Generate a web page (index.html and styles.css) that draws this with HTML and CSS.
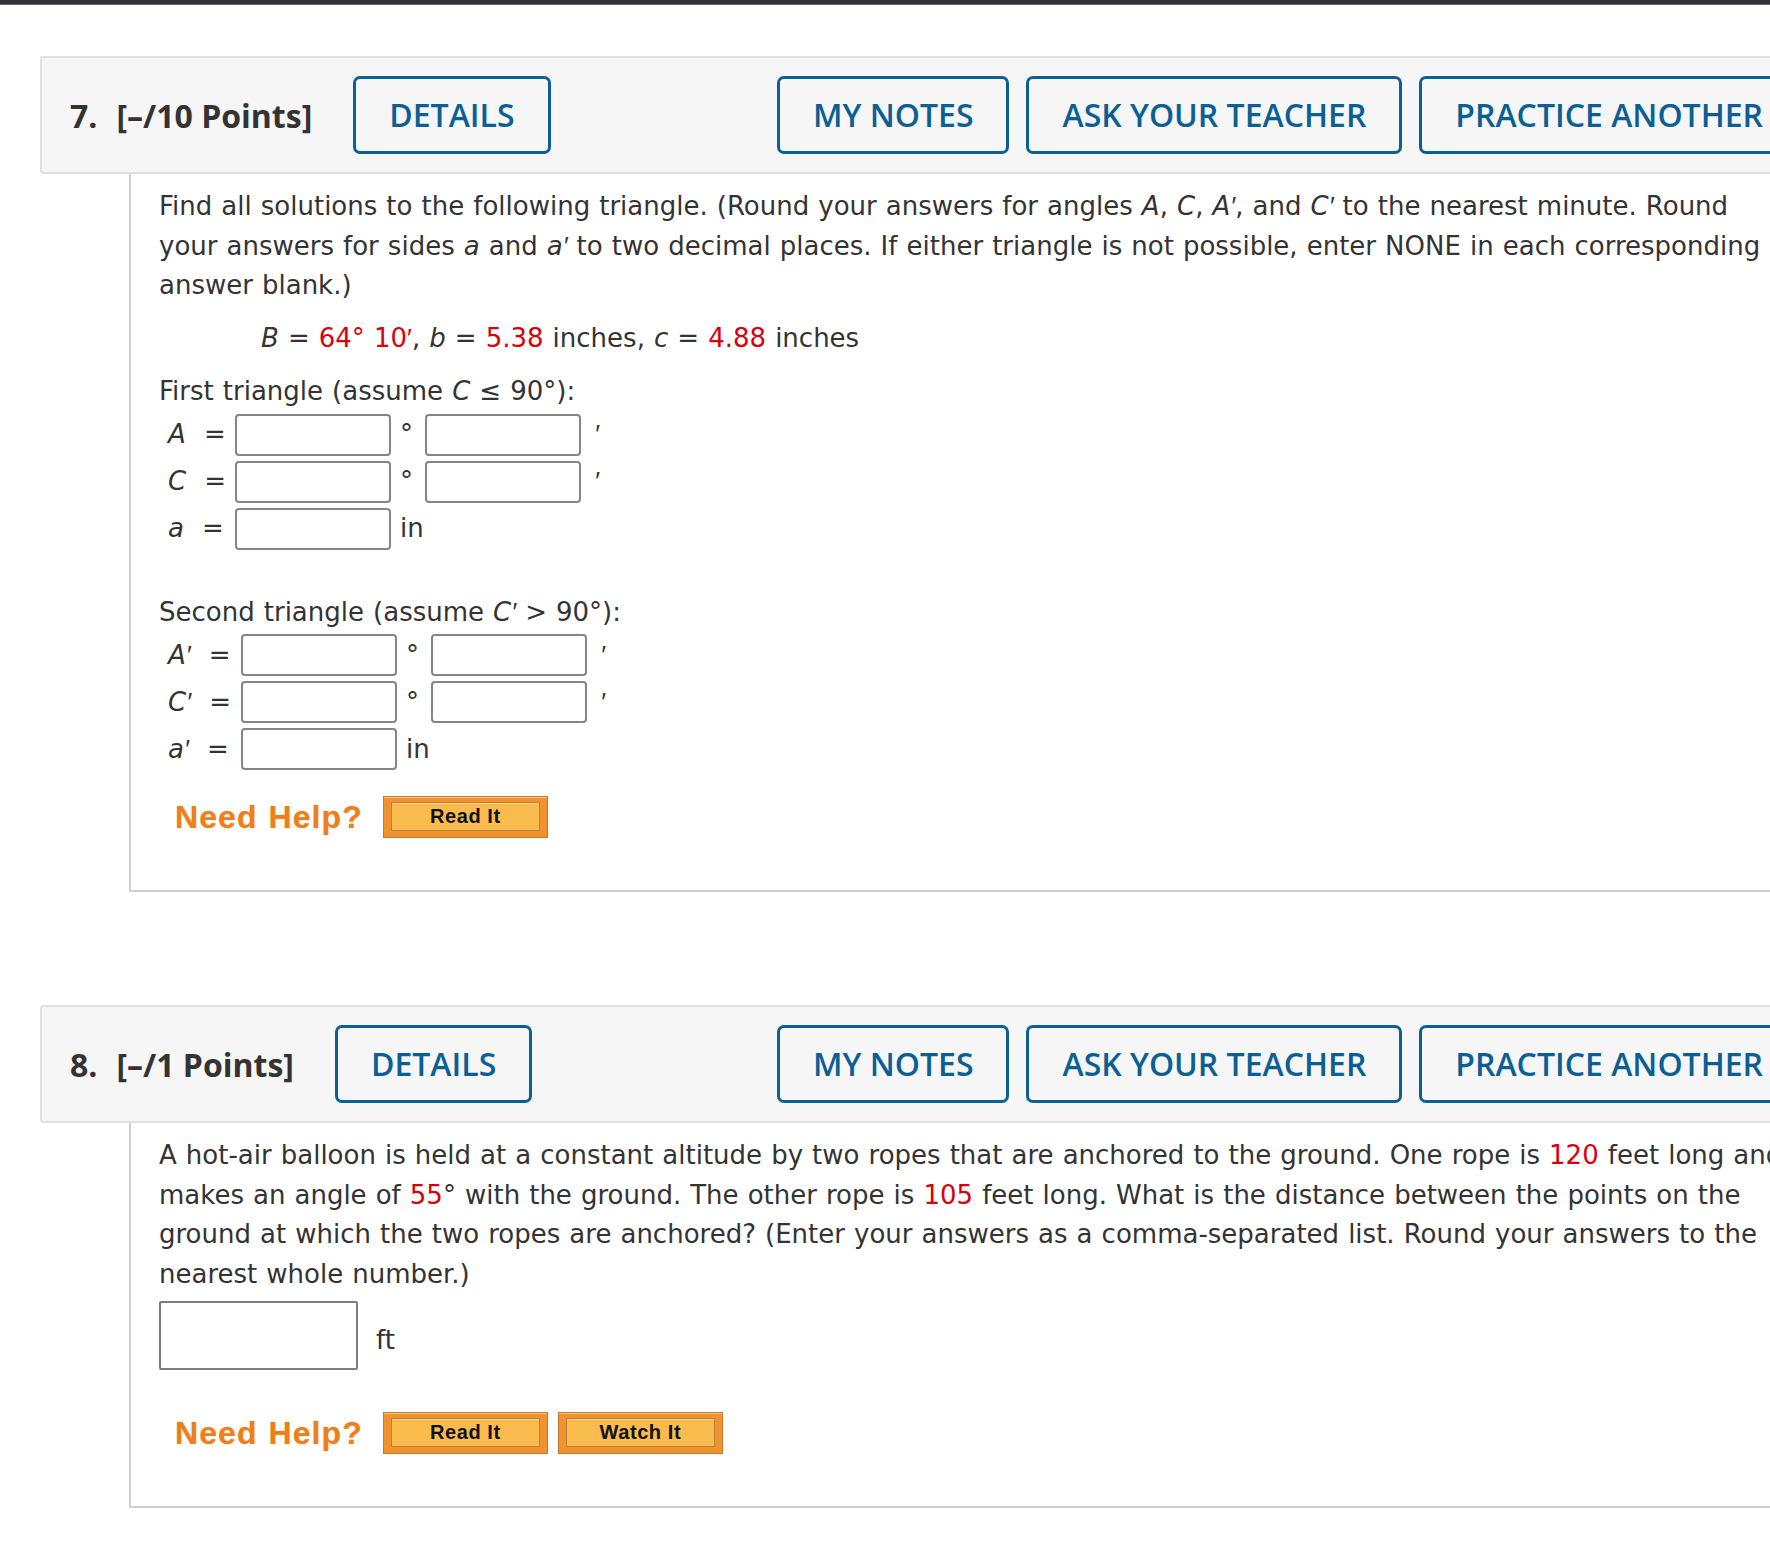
FILE: index.html
```html
<!DOCTYPE html>
<html lang="en">
<head>
<meta charset="utf-8">
<title>Assignment</title>
<link rel="stylesheet" href="styles.css">
</head>
<body>
<div class="topbar"></div>
<main class="questions">
  <section class="question">
    <header class="q-head">
      <div class="q-title"><span class="q-num">7.</span>[–/10 Points]</div>
      <button class="hbtn">DETAILS</button>
      <div class="hbtn-group">
        <button class="hbtn">MY NOTES</button>
        <button class="hbtn">ASK YOUR TEACHER</button>
        <button class="hbtn">PRACTICE ANOTHER</button>
      </div>
    </header>
    <div class="q-body">
      <p class="prompt">Find all solutions to the following triangle. (Round your answers for angles <i>A</i>, <i>C</i>, <i>A<span class="pr">′</span></i>, and <i>C<span class="pr">′</span></i> to the nearest minute. Round<br>your answers for sides <i>a</i> and <i>a<span class="pr">′</span></i> to two decimal places. If either triangle is not possible, enter NONE in each corresponding answer blank.)</p>
      <p class="given"><i>B</i> = <span class="red">64° 10<span class="pr">′</span></span>, <i>b</i> = <span class="red">5.38</span> inches, <i>c</i> = <span class="red">4.88</span> inches</p>
      <p class="part-title">First triangle (assume <i>C</i> ≤ 90°):</p>
      <table class="answers">
        <tr><td class="lbl"><i>A</i>&nbsp; =</td><td><input class="ans" type="text"></td><td class="unit">°</td><td><input class="ans" type="text"></td><td class="unit prime"><i class="pr">′</i></td></tr>
        <tr><td class="lbl"><i>C</i>&nbsp; =</td><td><input class="ans" type="text"></td><td class="unit">°</td><td><input class="ans" type="text"></td><td class="unit prime"><i class="pr">′</i></td></tr>
        <tr><td class="lbl"><i>a</i>&nbsp; =</td><td><input class="ans" type="text"></td><td class="unit" colspan="3">in</td></tr>
      </table>
      <p class="part-title second">Second triangle (assume <i>C<span class="pr">′</span></i> &gt; 90°):</p>
      <table class="answers primed">
        <tr><td class="lbl"><i>A<span class="pr">′</span></i>&nbsp; =</td><td><input class="ans" type="text"></td><td class="unit">°</td><td><input class="ans" type="text"></td><td class="unit prime"><i class="pr">′</i></td></tr>
        <tr><td class="lbl"><i>C<span class="pr">′</span></i>&nbsp; =</td><td><input class="ans" type="text"></td><td class="unit">°</td><td><input class="ans" type="text"></td><td class="unit prime"><i class="pr">′</i></td></tr>
        <tr><td class="lbl"><i>a<span class="pr">′</span></i>&nbsp; =</td><td><input class="ans" type="text"></td><td class="unit" colspan="3">in</td></tr>
      </table>
      <div class="help">
        <span class="need-help">Need Help?</span>
        <button class="help-btn"><span>Read It</span></button>
      </div>
    </div>
  </section>

  <section class="question">
    <header class="q-head">
      <div class="q-title"><span class="q-num">8.</span>[–/1 Points]</div>
      <button class="hbtn">DETAILS</button>
      <div class="hbtn-group">
        <button class="hbtn">MY NOTES</button>
        <button class="hbtn">ASK YOUR TEACHER</button>
        <button class="hbtn">PRACTICE ANOTHER</button>
      </div>
    </header>
    <div class="q-body">
      <p class="prompt">A hot-air balloon is held at a constant altitude by two ropes that are anchored to the ground. One rope is <span class="red">120</span> feet long and makes an angle of <span class="red">55</span>° with the ground. The other rope is <span class="red">105</span> feet long. What is the distance between the points on the ground at which the two ropes are anchored? (Enter your answers as a comma-separated list. Round your answers to the nearest whole number.)</p>
      <div class="answer-line">
        <input class="ans-wide" type="text">
        <span class="unit-ft">ft</span>
      </div>
      <div class="help help-q8">
        <span class="need-help">Need Help?</span>
        <button class="help-btn"><span>Read It</span></button>
        <button class="help-btn"><span>Watch It</span></button>
      </div>
    </div>
  </section>
</main>
</body>
</html>
```

FILE: styles.css
```css
html, body {
  margin: 0;
  padding: 0;
  overflow: hidden;
  background: #ffffff;
}

body {
  width: 1770px;
  height: 1548px;
  font-family: "DejaVu Sans", Verdana, sans-serif;
  color: #333333;
}

.topbar {
  height: 4px;
  background: #333438;
  border-bottom: 1px solid #66666a;
}

.questions {
  padding: 51px 0 0 40px;
}

.question {
  width: 1790px;
  margin-bottom: 113px;
}

.q-head {
  display: flex;
  align-items: center;
  box-sizing: border-box;
  height: 118px;
  padding: 0 0 0 28px;
  background: #f6f6f6;
  border: 2px solid #e0e0e0;
  border-radius: 4px;
  font-family: "Open Sans", sans-serif;
}

.q-title {
  font-size: 32px;
  font-weight: 700;
  color: #333333;
  margin-right: 41px;
  white-space: nowrap;
}

.q-num {
  margin-right: 19px;
}

.hbtn {
  font-family: "Open Sans", sans-serif;
  font-size: 32px;
  font-weight: 600;
  line-height: 42px;
  color: #0b5f95;
  background: transparent;
  border: 3px solid #0b5f95;
  border-radius: 7px;
  padding: 15px 33px;
  margin: 0;
  white-space: nowrap;
  cursor: pointer;
}

.hbtn-group {
  display: flex;
  gap: 17px;
  margin-left: auto;
  margin-right: 29px;
}

.q-body {
  margin-left: 89px;
  border-left: 2px solid #cfcfcf;
  border-bottom: 2px solid #cfcfcf;
  padding: 13px 15px 52px 28px;
  font-size: 26px;
  line-height: 39.5px;
  word-spacing: 0.8px;
}

.q-body p {
  margin: 0;
}

.red {
  color: #d8000c;
}

.pr {
  font-family: "Liberation Sans", Arial, sans-serif;
}

.given {
  margin-top: 13px !important;
  padding-left: 102px;
}

.part-title {
  margin-top: 14px !important;
}

.part-title.second {
  margin-top: 40px !important;
}

.answers {
  border-collapse: collapse;
  border-spacing: 0;
}

.answers td {
  padding: 0;
  vertical-align: middle;
  white-space: nowrap;
}

.answers td.lbl {
  padding: 0 9px 0 9px;
}

.answers.primed td.lbl {
  padding-right: 10px;
}

.answers td.unit {
  padding: 0 12px 0 9px;
}

.answers td.prime {
  padding: 0 0 0 13px;
}

.ans {
  display: block;
  box-sizing: border-box;
  width: 156px;
  height: 42px;
  margin: 2px 0 3px;
  padding: 0;
  border: 2px solid #858585;
  border-radius: 4px;
  background: #ffffff;
}

.help {
  display: flex;
  align-items: center;
  height: 42px;
  margin-top: 23px;
}

.help-q8 {
  margin-top: 42px;
}

.need-help {
  font-family: "Liberation Sans", Arial, sans-serif;
  font-weight: 700;
  font-size: 32px;
  line-height: 1;
  letter-spacing: 1.1px;
  color: #ef7f1a;
  text-shadow: 0 0 1px rgba(239, 127, 26, 0.5);
  margin-left: 16px;
  margin-right: 20px;
}

.help-btn {
  box-sizing: border-box;
  width: 165px;
  height: 42px;
  padding: 5px 7px 6px;
  margin: 0 10px 0 0;
  border: 1px solid #c57a2b;
  background: #f0922e;
  box-shadow: inset 0 1px 0 #f9c88c;
  cursor: pointer;
}

.help-btn span {
  display: flex;
  align-items: center;
  justify-content: center;
  box-sizing: border-box;
  height: 100%;
  border: 1px solid #b9803c;
  background: #f9bb4d;
  box-shadow: inset 0 1px 0 #fcd68a;
  font-family: "Liberation Sans", Arial, sans-serif;
  font-weight: 700;
  font-size: 20px;
  letter-spacing: 0.6px;
  color: #111111;
}

.answer-line {
  display: flex;
  align-items: center;
  margin-top: 7px;
}

.ans-wide {
  box-sizing: border-box;
  width: 199px;
  height: 69px;
  margin: 0;
  padding: 0;
  border: 2px solid #7d7d7d;
  border-radius: 2px;
  background: #ffffff;
}

.unit-ft {
  margin-left: 18px;
  padding-top: 10px;
}
```
